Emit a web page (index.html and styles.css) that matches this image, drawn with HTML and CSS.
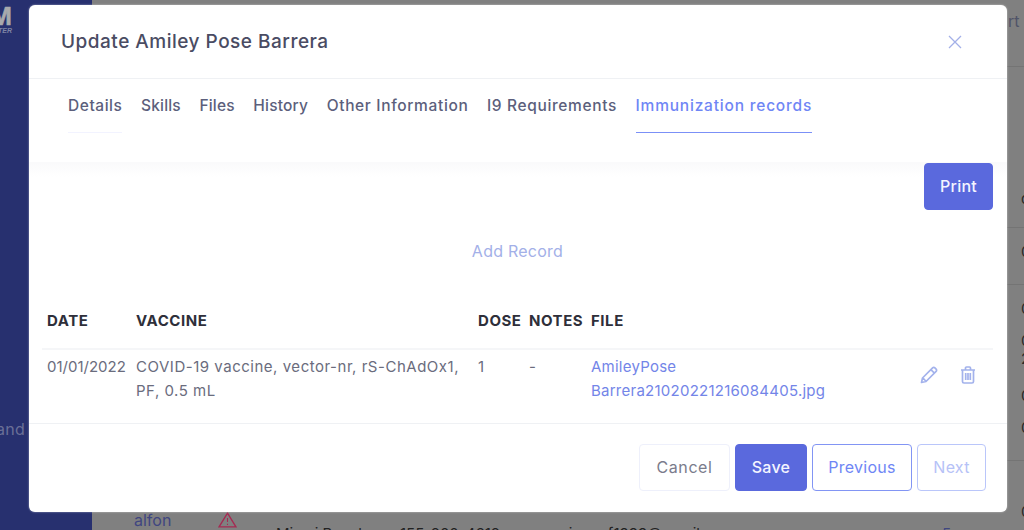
FILE: index.html
```html
<!DOCTYPE html>
<html lang="en">
<head>
<meta charset="utf-8">
<title>Update Amiley Pose Barrera</title>
<link rel="stylesheet" href="styles.css">
</head>
<body>
<div class="page">
  <aside class="sidebar">
    <div class="logo"><span class="logo-m">M</span><span class="logo-sub">TER</span></div>
    <div class="side-link">and</div>
  </aside>
  <main class="main">
    <div class="bg-row bg-top"><span class="bg-head">rt</span></div>
    <div class="bg-row bg-h160"><span class="bg-glyph">d</span></div>
    <div class="bg-row bg-h57"><span class="bg-glyph">0</span></div>
    <div class="bg-row bg-h176"><span class="bg-glyph">0</span><span class="bg-glyph bg-short">0</span><span class="bg-glyph bg-tall">2</span><span class="bg-glyph">0</span><span class="bg-glyph">0</span></div>
    <div class="bg-last">
      <span class="bg-name">alfon</span>
      <svg class="warn" viewBox="0 0 18 15" aria-hidden="true"><path d="M9 1 17 14H1Z" fill="none" stroke="#a52a52" stroke-width="1.3"/><path d="M9 5.5v4M9 11v1.2" stroke="#a52a52" stroke-width="1"/></svg>
      <span class="bg-city">Miami Beach</span>
      <span class="bg-phone">155-200-4612</span>
      <span class="bg-mail">vanieguef1999@gmail.com</span>
      <span class="bg-num">5</span>
      <span class="bg-end">0</span>
    </div>
  </main>
</div>

<section class="modal">
  <header class="modal-head">
    <h1>Update Amiley Pose Barrera</h1>
    <svg class="close" viewBox="0 0 14 14" aria-hidden="true"><path d="M1 1 13 13M13 1 1 13"/></svg>
  </header>
  <nav class="tabs">
    <a class="tab tab-first">Details</a>
    <a class="tab tab-narrow">Skills</a>
    <a class="tab tab-narrow">Files</a>
    <a class="tab tab-narrow">History</a>
    <a class="tab tab-wide">Other Information</a>
    <a class="tab tab-wide">I9 Requirements</a>
    <a class="tab tab-active">Immunization records</a>
  </nav>
  <div class="body">
    <div class="print-bar"><button class="btn btn-primary btn-print">Print</button></div>
    <div class="add-record">Add Record</div>
    <div class="grid grid-head">
      <div>DATE</div><div>VACCINE</div><div>DOSE</div><div>NOTES</div><div>FILE</div><div></div>
    </div>
    <div class="grid grid-row">
      <div>01/01/2022</div>
      <div class="vaccine">COVID-19 vaccine, vector-nr, rS-ChAdOx1, PF, 0.5 mL</div>
      <div>1</div>
      <div>-</div>
      <div><a class="file-link">AmileyPose<br>Barrera21020221216084405.jpg</a></div>
      <div class="actions">
        <svg class="icon" viewBox="0 0 18 18" aria-hidden="true"><path d="M12.6 1.9a1.6 1.6 0 0 1 2.3 0l1.2 1.2a1.6 1.6 0 0 1 0 2.3L6 15.5l-4.5 1 1-4.5ZM10.9 3.6l3.5 3.5M3 12.2l2.8 2.8"/></svg>
        <svg class="icon icon-trash" viewBox="0 0 16 18" aria-hidden="true"><path d="M1 4h14M5.5 4V2a1 1 0 0 1 1-1h3a1 1 0 0 1 1 1v2M2.5 4v11.5a1.5 1.5 0 0 0 1.5 1.5h8a1.5 1.5 0 0 0 1.5-1.5V4M5.7 7v7M8 7v7M10.3 7v7"/></svg>
      </div>
    </div>
  </div>
  <footer class="modal-foot">
    <button class="btn btn-cancel">Cancel</button>
    <button class="btn btn-primary btn-save">Save</button>
    <button class="btn btn-outline btn-prev">Previous</button>
    <button class="btn btn-outline btn-next">Next</button>
  </footer>
</section>
</body>
</html>
```
FILE: styles.css
```css
* { box-sizing: border-box; }
html, body { margin: 0; height: 530px; overflow: hidden; }
body { font-family: Inter, "Liberation Sans", sans-serif; background: #808080; color: #4a4c63; }

.page { display: flex; height: 530px; }
.sidebar { width: 92px; background: #27306f; flex: none; overflow: hidden; }
.logo { display: flex; flex-direction: column; align-items: flex-end; width: 12px; height: 37px; padding-top: 5px; }
.logo-m { font: 900 26px/22px "Liberation Sans", sans-serif; color: #a8a9ad; -webkit-text-stroke: .6px #a8a9ad; white-space: nowrap; }
.logo-sub { font: italic 700 7px/8px "Liberation Sans", sans-serif; color: #7f84a5; white-space: nowrap; }
.side-link { margin-top: 382px; margin-left: -4px; font-size: 16px; letter-spacing: .3px; line-height: 20px; color: #6a6f97; }

.main { flex: 1; min-width: 0; overflow: hidden; }
.bg-row { border-bottom: 1px solid #747474; padding-left: 929px; display: flex; flex-direction: column; align-items: flex-start; font-size: 15px; color: #2a2a2a; }
.bg-top { height: 67px; padding-left: 916px; padding-top: 9px; }
.bg-head { color: #505468; font-size: 16px; line-height: 24px; }
.bg-h160 { height: 161px; padding-top: 122px; }
.bg-h57 { height: 57px; padding-top: 14px; }
.bg-h176 { height: 176px; padding-top: 14px; line-height: 30px; }
.bg-glyph { line-height: 20px; height: 32px; }
.bg-short { height: 18px; }
.bg-tall { height: 37px; }
.bg-last { position: relative; height: 69px; }
.bg-name { position: absolute; left: 42px; top: 49px; font-size: 16px; line-height: 20px; color: #3f4680; }
.warn { position: absolute; left: 126px; top: 51px; width: 19px; height: 16px; }
.bg-city, .bg-phone, .bg-mail { position: absolute; top: 63px; font-size: 15px; line-height: 20px; color: #222; white-space: nowrap; }
.bg-city { left: 184px; }
.bg-phone { left: 308px; }
.bg-mail { left: 451px; }
.bg-num { position: absolute; left: 850px; top: 63px; font-size: 15px; line-height: 20px; color: #3f4680; }
.bg-end { position: absolute; left: 929px; top: 41px; font-size: 15px; line-height: 20px; color: #2a2a2a; }

.modal { position: absolute; left: 29px; top: 5px; width: 978px; height: 507px; background: #fff; border-radius: 6px; box-shadow: 0 0 2px rgba(255,255,255,.6); display: flex; flex-direction: column; }
.modal-head { height: 74px; flex: none; padding: 0 45px 0 32px; display: flex; align-items: center; justify-content: space-between; border-bottom: 1px solid #eff1f4; }
.modal-head h1 { margin: 0; font-size: 19px; font-weight: 500; line-height: 26px; color: #4a4c63; letter-spacing: .5px; }
.close { width: 14px; height: 14px; fill: none; stroke: #a3b0e8; stroke-width: 1.3; }

.tabs { height: 84px; flex: none; display: flex; gap: 18.5px; padding-left: 39px; align-items: flex-start; background: linear-gradient(#fff 83px, #fafafb 83px); }
.tab { display: block; height: 54px; padding-top: 14px; font-size: 15.5px; line-height: 26px; font-weight: 500; color: #5c5f7c; letter-spacing: .55px; border-bottom: 1px solid #f2f3ff; white-space: nowrap; }
.tab-narrow { letter-spacing: .2px; border-bottom-color: transparent; }
.tab-wide { letter-spacing: .65px; border-bottom-color: transparent; }
.tab-active { color: #6f86f5; border-bottom-color: #7b90f7; letter-spacing: .8px; }

.body { flex: 1; min-height: 0; padding: 0 14px 0 13px; background: linear-gradient(#fafafb, #fff 14px); }
.print-bar { display: flex; justify-content: flex-end; }
.btn { font-family: inherit; font-size: 16px; letter-spacing: .25px; font-weight: 500; border-radius: 4px; background: #fff; height: 47px; padding: 0 0 2px; cursor: pointer; }
.btn-primary { background: #5a69dd; border: 1px solid #5a69dd; color: #f4f5ff; }
.btn-print { width: 69px; height: 47px; }
.add-record { margin-top: 18px; height: 48px; text-align: center; font-size: 16px; letter-spacing: .25px; line-height: 46px; color: #a3b0e8; font-weight: 400; }

.grid { display: grid; grid-template-columns: 89px 342px 51px 62px 318px 88px; }
.grid > div { padding: 0 5px; }
.grid-head { margin-top: 31px; height: 41px; font-size: 15px; font-weight: 700; line-height: 22px; color: #2e2f3a; letter-spacing: .55px; }
.grid-head > div { white-space: nowrap; padding-top: 3px; }
.grid-row { height: 65px; font-size: 15px; line-height: 24px; color: #6a6c7d; border-top: 2px solid #f5f6f8; padding-top: 5px; }
.vaccine { letter-spacing: .52px; }
.file-link { color: #7385e8; white-space: nowrap; letter-spacing: .25px; }
.actions { display: flex; gap: 22px; padding: 11px 0 0 16px !important; align-items: flex-start; }
.icon { width: 18px; height: 18px; fill: none; stroke: #a3b2ec; stroke-width: 1.7; stroke-linejoin: round; flex: none; }
.icon-trash { width: 16px; }

.modal-foot { flex: none; height: 89px; border-top: 1px solid #eff1f4; display: flex; gap: 5px; justify-content: flex-end; padding: 20px 21px 0 0; }
.btn-cancel { width: 91px; border: 1px solid #eef0fb; color: #7a7c8c; font-weight: 400; letter-spacing: .6px; }
.btn-save { width: 72px; }
.btn-outline { background: #fff; border: 1px solid #8295f4; color: #6f86f5; font-weight: 400; }
.btn-prev { width: 100px; }
.btn-next { width: 69px; border-color: #bac6fa; color: #b6c2f7; }
```
